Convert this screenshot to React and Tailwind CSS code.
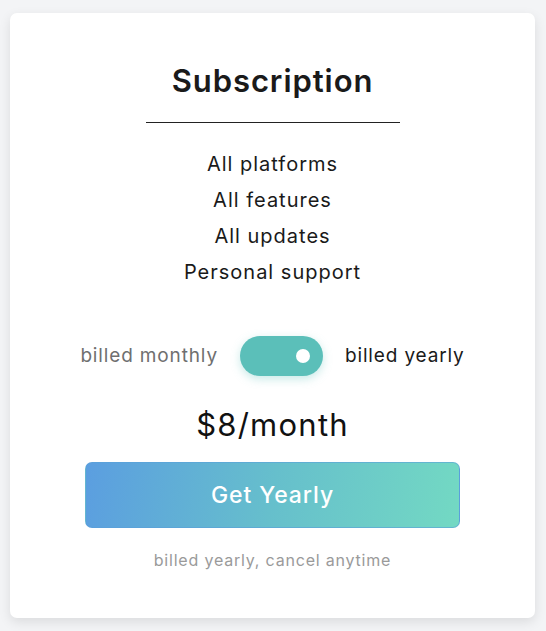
import React from "react";

export default function App() {
  return (
    <div
      className="min-h-[631px] w-full bg-[#f3f4f6] pl-[10px] pr-[11px] pt-[13px] pb-[13px]"
      style={{ fontFamily: "Inter, 'Noto Sans', sans-serif" }}
    >
      <div className="flex h-[605px] w-[525px] flex-col items-center rounded-[7px] bg-white shadow-[0_4px_12px_rgba(0,0,0,0.10)]">
        <h1 className="mt-[48px] text-[31px] font-semibold leading-[40px] tracking-[0.03em] text-[#1a1a1a]">
          Subscription
        </h1>
        <div className="mt-[21px] h-px w-[254px] bg-[#222]" />
        <ul className="mt-[23px] flex flex-col items-center text-[20px] leading-[36px] tracking-[0.05em] text-[#1a1a1a]">
          <li>All platforms</li>
          <li>All features</li>
          <li>All updates</li>
          <li>Personal support</li>
        </ul>
        <div className="mt-[46px] flex items-center gap-[22px] text-[19px] tracking-[0.045em]">
          <span className="text-[#6f6f6f]">billed monthly</span>
          <div className="flex h-[40px] w-[83px] items-center justify-end rounded-full bg-[#5bbfb9] pr-[13px] shadow-[0_3px_10px_rgba(91,191,185,0.35)]">
            <div className="h-[14px] w-[14px] rounded-full bg-white" />
          </div>
          <span className="text-[#1a1a1a]">billed yearly</span>
        </div>
        <div className="mt-[29px] text-[31px] leading-[40px] tracking-[0.04em] text-[#111]">$8/month</div>
        <button className="mt-[17px] flex h-[66px] w-[375px] items-center justify-center rounded-[7px] border border-[#5aa0d8]/60 bg-[linear-gradient(100deg,#5b9ee0_0%,#66bfcc_50%,#73d9c3_100%)] text-[23px] font-medium tracking-[0.04em] text-white">
          Get Yearly
        </button>
        <div className="mt-[20px] text-[16px] tracking-[0.05em] text-[#9a9a9a]">billed yearly, cancel anytime</div>
      </div>
    </div>
  );
}
